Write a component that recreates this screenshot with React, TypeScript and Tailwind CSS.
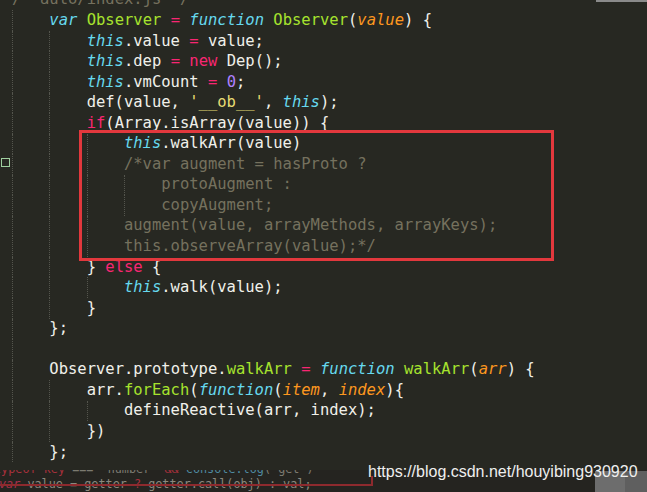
type Tok = [string, string?];

const KW = "italic text-[#66d9ef]";
const PK = "text-[#f92672]";
const GR = "text-[#a6e22e]";
const OR = "italic text-[#fd971f]";
const PU = "text-[#ae81ff]";
const YE = "text-[#e6db74]";
const CM = "text-[#75715e]";

const lines: { indent: number; toks: Tok[] }[] = [
  { indent: 0, toks: [["/* auto/index.js */", CM]] },
  {
    indent: 4,
    toks: [
      ["var", KW],
      [" "],
      ["Observer", GR],
      [" "],
      ["=", PK],
      [" "],
      ["function", KW],
      [" "],
      ["Observer", GR],
      ["("],
      ["value", OR],
      [") {"],
    ],
  },
  { indent: 8, toks: [["this", KW], [".value "], ["=", PK], [" value;"]] },
  { indent: 8, toks: [["this", KW], [".dep "], ["=", PK], [" "], ["new", PK], [" Dep();"]] },
  { indent: 8, toks: [["this", KW], [".vmCount "], ["=", PK], [" "], ["0", PU], [";"]] },
  { indent: 8, toks: [["def(value, "], ["'__ob__'", YE], [", "], ["this", KW], [");"]] },
  { indent: 8, toks: [["if", PK], ["(Array.isArray(value)) {"]] },
  { indent: 12, toks: [["this", KW], [".walkArr(value)"]] },
  { indent: 12, toks: [["/*var augment = hasProto ?", CM]] },
  { indent: 16, toks: [["protoAugment :", CM]] },
  { indent: 16, toks: [["copyAugment;", CM]] },
  { indent: 12, toks: [["augment(value, arrayMethods, arrayKeys);", CM]] },
  { indent: 12, toks: [["this.observeArray(value);*/", CM]] },
  { indent: 8, toks: [["} "], ["else", PK], [" {"]] },
  { indent: 12, toks: [["this", KW], [".walk(value);"]] },
  { indent: 8, toks: [["}"]] },
  { indent: 4, toks: [["};"]] },
  { indent: 4, toks: [] },
  {
    indent: 4,
    toks: [
      ["Observer.prototype."],
      ["walkArr", GR],
      [" "],
      ["=", PK],
      [" "],
      ["function", KW],
      [" "],
      ["walkArr", GR],
      ["("],
      ["arr", OR],
      [") {"],
    ],
  },
  {
    indent: 8,
    toks: [
      ["arr."],
      ["forEach", GR],
      ["("],
      ["function", KW],
      ["("],
      ["item", OR],
      [", "],
      ["index", OR],
      ["){"],
    ],
  },
  { indent: 12, toks: [["defineReactive(arr, index);"]] },
  { indent: 8, toks: [["})"]] },
  { indent: 4, toks: [["};"]] },
];

const CodeLine = ({ indent, toks }: { indent: number; toks: Tok[] }) => {
  const guides = Array.from({ length: Math.floor(indent / 4) });
  return (
    <div className="flex h-[20.55px] items-stretch whitespace-pre">
      {guides.map((_, i) => (
        <span key={i} className="w-[4ch] shrink-0 border-l border-dotted border-[#54554d]" />
      ))}
      <span className="self-center">
        {toks.map(([t, c], i) => (
          <span key={i} className={c ?? "text-[#f0f0ea]"}>
            {t}
          </span>
        ))}
      </span>
    </div>
  );
};

export default function App() {
  return (
    <div className="relative flex h-[492px] w-[647px] flex-col overflow-hidden bg-[#272822]">
      {/* editor */}
      <div className="h-[477px] overflow-hidden pl-[12px] font-['DejaVu_Sans_Mono',monospace] text-[15.5px]">
        <div className="mt-[-10.2px] flex flex-col">
          {lines.map((l, i) => (
            <CodeLine key={i} indent={l.indent} toks={l.toks} />
          ))}
        </div>
      </div>

      {/* lower pane */}
      <div className="flex flex-1 bg-[#252420]">
        <div className="flex-1 overflow-hidden pl-[1px] font-['DejaVu_Sans_Mono',monospace] text-[11.8px] leading-[15px] whitespace-pre">
          <div className="mt-[-8px] ml-[-7px]">
            <span className="text-[#a8303c]">typeof key</span>
            <span className="text-[#7c7a70]"> === 'number' </span>
            <span className="text-[#a8303c]">&amp;&amp;</span>
            <span className="text-[#4f8aa0]"> console.log</span>
            <span className="text-[#7c7a70]">('get')</span>
          </div>
          <div className="ml-[-2px]">
            <span className="italic text-[#a8304c]">var</span>
            <span className="text-[#8a887e]"> value = getter </span>
            <span className="text-[#a8303c]">?</span>
            <span className="text-[#8a887e]"> getter.call(obj) : val;</span>
          </div>
        </div>
        <div className="mt-[1px] w-[30px] bg-[#6d6d6d]" />
        <div className="mt-[1px] w-[22px] bg-[#5f5f5f]" />
      </div>

      {/* annotation boxes */}
      <div className="absolute left-[79px] top-[130px] h-[131px] w-[475px] border-[3px] border-[#e2383d]" />
      <div className="absolute left-0 top-[476px] h-[10px] w-[373px] border-b-2 border-r-2 border-[#8e2a2e]" />

      {/* gutter marker */}
      <div className="absolute left-[1px] top-[158px] h-[9px] w-[9px] border-[1.5px] border-[#9fcf9f]" />

      {/* top edge bits */}
      <div className="absolute right-0 top-0 h-[2px] w-[51px] bg-[#8a8a8a]" />

      {/* watermark */}
      <div className="absolute left-[368px] top-[462px] font-['Liberation_Sans',Arial,sans-serif] text-[16px] leading-[20px] text-[#efefef]">
        https://blog.csdn.net/houyibing930920
      </div>
    </div>
  );
}
